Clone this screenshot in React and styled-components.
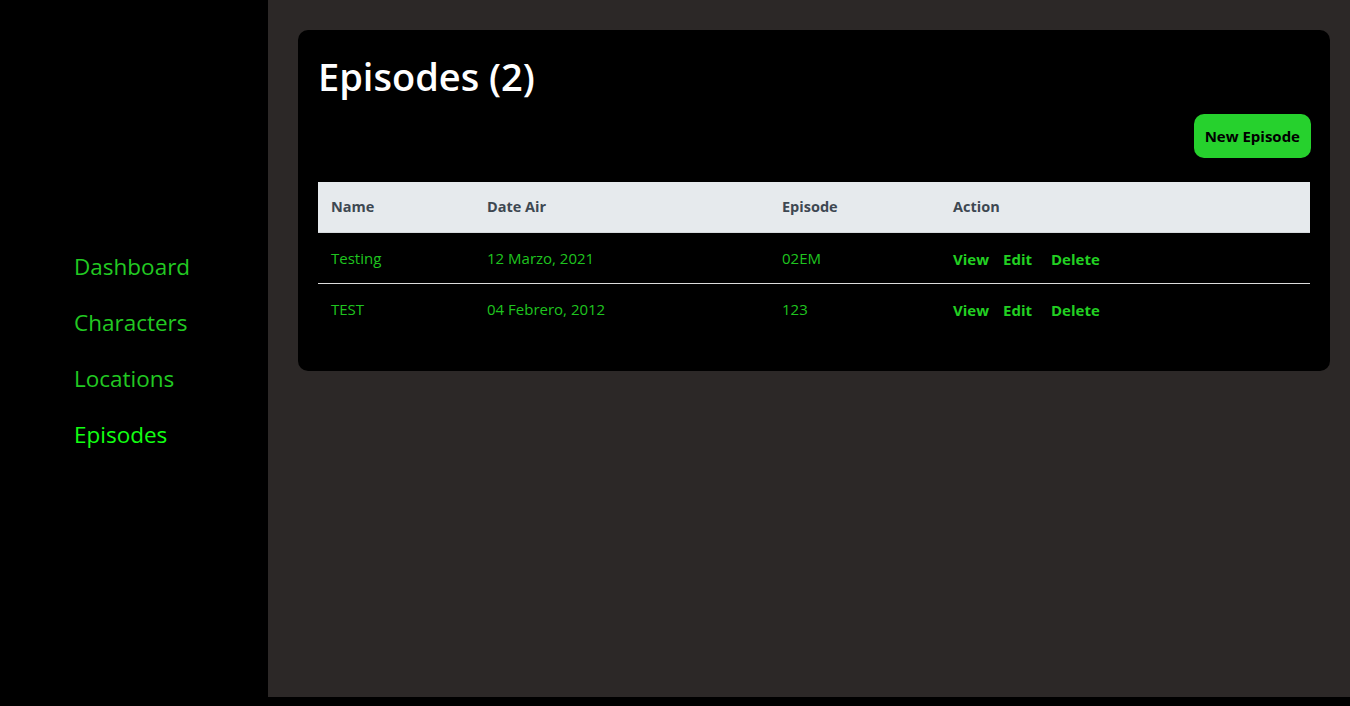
import React from "react";
import styled, { createGlobalStyle } from "styled-components";

const Global = createGlobalStyle`
  html, body { margin: 0; padding: 0; background: #000; }
  body { font-family: "Open Sans", "Noto Sans", sans-serif; }
  * { box-sizing: border-box; }
`;

const Layout = styled.div`
  display: flex;
  height: 697px;
`;

const Sidebar = styled.nav`
  width: 268px;
  flex-shrink: 0;
  background: #000;
  display: flex;
  flex-direction: column;
  justify-content: center;
  padding-left: 74px;
  padding-top: 5px;
`;

const NavLink = styled.a`
  font-size: 22.5px;
  line-height: 56px;
  color: ${(p) => (p.$active ? "#12ff12" : "#22c922")};
  text-decoration: none;
  cursor: pointer;
`;

const Main = styled.main`
  flex: 1;
  background: #2c2827;
  padding: 30px 20px 30px 30px;
`;

const Card = styled.section`
  background: #000;
  border-radius: 10px;
  padding: 20px 20px 37px 20px;
`;

const Title = styled.h1`
  margin: 0;
  color: #fff;
  font-size: 38px;
  font-weight: 600;
  line-height: 52px;
`;

const Toolbar = styled.div`
  display: flex;
  justify-content: flex-end;
  margin-top: 12px;
  margin-bottom: 24px;
`;

const Button = styled.button`
  background: #26d12d;
  color: #000;
  border: none;
  border-radius: 10px;
  height: 44px;
  padding: 0 11px;
  font-family: inherit;
  font-size: 15px;
  font-weight: 700;
  cursor: pointer;
  margin-right: -1px;
`;

const Table = styled.table`
  width: 100%;
  border-collapse: collapse;
  table-layout: fixed;
`;

const Th = styled.th`
  background: #e6eaed;
  color: #3e4852;
  text-align: left;
  font-size: 14.5px;
  font-weight: 700;
  height: 50px;
  padding: 0 13px;
  border-bottom: 1px solid #d5d9dc;
  width: ${(p) => p.$w || "auto"};
`;

const Tr = styled.tr`
  & + & td { border-top: 1px solid #dcdcdc; }
`;

const Td = styled.td`
  color: #1fc41f;
  font-size: 15px;
  height: 51px;
  padding: 0 13px;
`;

const Actions = styled.div`
  display: flex;
  align-items: center;
  gap: 14px;
  padding-top: 2px;
`;

const ActionLink = styled.a`
  color: #22d022;
  font-weight: 700;
  font-size: 15px;
  cursor: pointer;
  margin-right: ${(p) => p.$extra || 0}px;
`;

const episodes = [
  { name: "Testing", date: "12 Marzo, 2021", code: "02EM" },
  { name: "TEST", date: "04 Febrero, 2012", code: "123" },
];

export default function App() {
  return (
    <>
      <Global />
      <Layout>
        <Sidebar>
          <NavLink>Dashboard</NavLink>
          <NavLink>Characters</NavLink>
          <NavLink>Locations</NavLink>
          <NavLink $active>Episodes</NavLink>
        </Sidebar>
        <Main>
          <Card>
            <Title>Episodes (2)</Title>
            <Toolbar>
              <Button>New Episode</Button>
            </Toolbar>
            <Table>
              <thead>
                <tr>
                  <Th $w="156px">Name</Th>
                  <Th $w="295px">Date Air</Th>
                  <Th $w="171px">Episode</Th>
                  <Th>Action</Th>
                </tr>
              </thead>
              <tbody>
                {episodes.map((e) => (
                  <Tr key={e.name}>
                    <Td>{e.name}</Td>
                    <Td>{e.date}</Td>
                    <Td>{e.code}</Td>
                    <Td>
                      <Actions>
                        <ActionLink>View</ActionLink>
                        <ActionLink $extra={5}>Edit</ActionLink>
                        <ActionLink>Delete</ActionLink>
                      </Actions>
                    </Td>
                  </Tr>
                ))}
              </tbody>
            </Table>
          </Card>
        </Main>
      </Layout>
    </>
  );
}
